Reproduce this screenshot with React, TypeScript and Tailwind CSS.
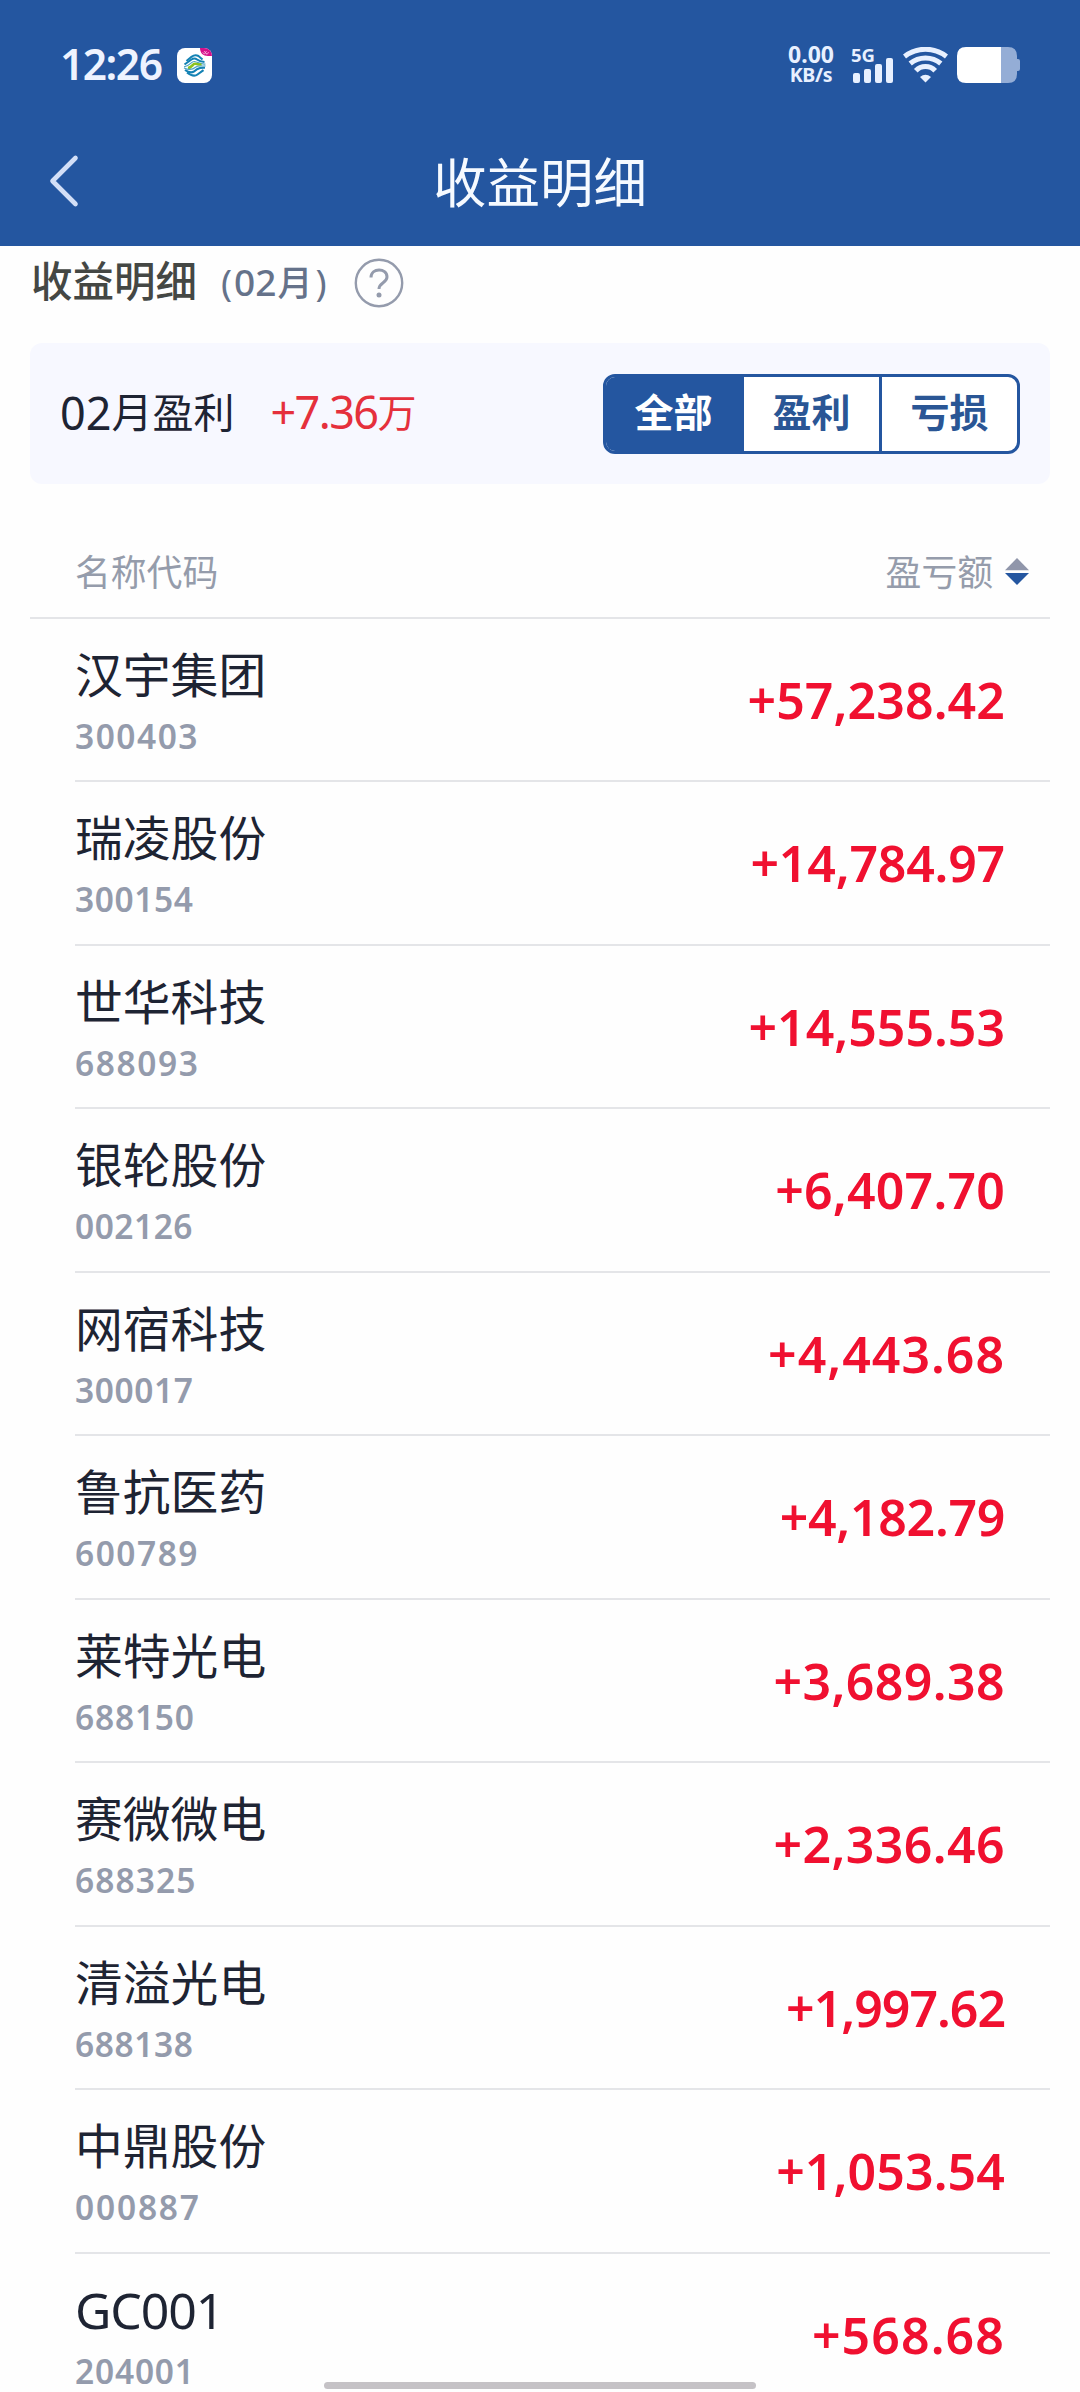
import { useState } from "react";

type Holding = { name: string; code: string; amount: string; codeTrack: string; amountTrack: string };

const holdings: Holding[] = [
  { name: "汉宇集团", code: "300403", amount: "+57,238.42", codeTrack: "tracking-[1.5px]", amountTrack: "tracking-[0.1px]" },
  { name: "瑞凌股份", code: "300154", amount: "+14,784.97", codeTrack: "tracking-[0.6px]", amountTrack: "tracking-[-0.2px]" },
  { name: "世华科技", code: "688093", amount: "+14,555.53", codeTrack: "tracking-[1.6px]", amountTrack: "tracking-[0px]" },
  { name: "银轮股份", code: "002126", amount: "+6,407.70", codeTrack: "tracking-[0.5px]", amountTrack: "tracking-[0.2px]" },
  { name: "网宿科技", code: "300017", amount: "+4,443.68", codeTrack: "tracking-[0.6px]", amountTrack: "tracking-[1px]" },
  { name: "鲁抗医药", code: "600789", amount: "+4,182.79", codeTrack: "tracking-[1.5px]", amountTrack: "tracking-[-0.3px]" },
  { name: "莱特光电", code: "688150", amount: "+3,689.38", codeTrack: "tracking-[0.8px]", amountTrack: "tracking-[0.4px]" },
  { name: "赛微微电", code: "688325", amount: "+2,336.46", codeTrack: "tracking-[1.1px]", amountTrack: "tracking-[0.4px]" },
  { name: "清溢光电", code: "688138", amount: "+1,997.62", codeTrack: "tracking-[0.6px]", amountTrack: "tracking-[-1px]" },
  { name: "中鼎股份", code: "000887", amount: "+1,053.54", codeTrack: "tracking-[1.8px]", amountTrack: "tracking-[0.1px]" },
  { name: "GC001", code: "204001", amount: "+568.68", codeTrack: "tracking-[0.8px]", amountTrack: "tracking-[1.1px]" },
];

const tabs = ["全部", "盈利", "亏损"];

function CarrierIcon() {
  return (
    <svg className="ml-[16px] h-[35px] w-[35px]" viewBox="0 0 35 35" fill="none">
      <clipPath id="tile"><rect width="35" height="35" rx="8" /></clipPath>
      <g clipPath="url(#tile)">
        <rect width="35" height="35" fill="#fff" />
        <path d="M23 0h12v8h-4c-5 0-8-3-8-8Z" fill="#d6108a" />
        <path d="M25.500 4.500l2 1.500 2-3M29 6l3-1.500M27 3l3 3.500" stroke="#f7b6dc" strokeWidth=".8" />
      </g>
      <path d="M9.500 13L14.500 8.800Q18 6.200 21.500 8L25.500 11.500" stroke="#1482b4" strokeWidth="2.100" />
      <path d="M7.500 16.500L14.500 11.500Q17.500 9.500 20 11.500T27.500 14" stroke="#1482b4" strokeWidth="2.100" />
      <path d="M7 18.800C12.500 18.800 14 13 17.500 13.500S23 16.500 28.500 16" stroke="#4da3c2" strokeWidth="1.200" />
      <path d="M11 20C15 19.500 15.500 16 18 15.800S22 17.300 24.500 16.300" stroke="#8bc21f" strokeWidth="2.600" />
      <path d="M7 20C13 22.800 16 21.500 18.500 19.300S24 18.500 28.500 17.800" stroke="#4da3c2" strokeWidth="1.200" />
      <path d="M8 22Q13 25.500 16.500 23.800L20.500 21Q23 19.500 28 19.800" stroke="#1482b4" strokeWidth="2.100" />
      <path d="M10 24.500Q16.500 29.500 20.500 26.500L26.500 22.200" stroke="#1482b4" strokeWidth="2.100" />
    </svg>
  );
}

function StatusBar() {
  return (
    <div className="flex h-[130px] items-center justify-between pl-[60px] pr-[60px]">
      <div className="flex items-center font-['Noto_Sans'] text-[#eef3ff]">
        <span className="w-[101px] whitespace-nowrap pb-[2px] text-[42.500px] font-semibold leading-[48px] tracking-[-1.500px]">12:26</span>
        <CarrierIcon />
      </div>
      <div className="flex items-start font-['Noto_Sans'] text-[#e8f0ff]">
        <div className="mr-[16px] flex w-[48px] flex-col items-center whitespace-nowrap font-bold">
          <span className="text-[23px] leading-[15px]">0.00</span>
          <span className="mt-[4px] text-[19.500px] leading-[17px] tracking-[-0.3px]">KB/s</span>
        </div>
        <div className="relative h-[36px] w-[43px]">
          <span className="absolute left-0 top-0 text-[18.500px] font-bold leading-[15px]">5G</span>
          <div className="absolute bottom-0 left-[2px] flex items-end gap-[4.500px]">
            <i className="h-[10px] w-[6.500px] rounded-[2px] bg-[#e8f0ff]" />
            <i className="h-[14px] w-[6.500px] rounded-[2px] bg-[#e8f0ff]" />
            <i className="h-[19px] w-[6.500px] rounded-[2px] bg-[#e8f0ff]" />
            <i className="h-[25px] w-[6.500px] rounded-[2px] bg-[#e8f0ff]" />
          </div>
        </div>
        <svg className="ml-[9px] h-[36px] w-[45px]" viewBox="0 0 45 36" fill="none" stroke="#e8f0ff" strokeWidth="5">
          <path d="M1.500 9.500C14-.2 31-.2 43.500 9.500" />
          <path d="M7.200 16.500C16 9 29 9 37.800 16.500" />
          <path d="M12.800 23.800C18 18.200 27 18.200 32.200 23.800" />
          <path d="M17 30q5.500-4.500 11 0l-5.500 5.500Z" fill="#e8f0ff" stroke="none" />
        </svg>
        <svg className="ml-[9px] h-[36px] w-[63px]" viewBox="0 0 63 36">
          <path d="M44 0h7q9 0 9 9v3h1q2 0 2 2v8q0 2-2 2h-1v3q0 9-9 9h-7Z" fill="#94add6" />
          <path d="M44 0H9Q0 0 0 9v18q0 9 9 9h35Z" fill="#fff" />
        </svg>
      </div>
    </div>
  );
}

export default function App() {
  const [active, setActive] = useState(0);
  return (
    <div className="relative h-[2392px] w-[1080px] overflow-hidden bg-[#fefefe] font-['Noto_Sans_CJK_SC',sans-serif]">
      <header className="h-[246px] bg-[#2456a0]">
        <StatusBar />
        <div className="grid h-[101px] grid-cols-[200px_1fr_200px] items-center">
          <svg className="ml-[47px] h-[56px] w-[32px]" viewBox="0 0 32 56" fill="none" stroke="#d3dff7" strokeWidth="4.600" strokeLinecap="round" strokeLinejoin="round">
            <path d="M28.500 5L5.500 28L28.500 51" />
          </svg>
          <h1 className="pb-[2px] text-center text-[53.500px] font-normal leading-[60px] text-[#f6faff]">收益明细</h1>
        </div>
      </header>

      <div className="flex h-[97px] items-start pl-[31px] pt-[5px]">
        <h2 className="w-[190px] whitespace-nowrap text-[41.500px] font-medium leading-[56px] text-[#444744]">收益明细</h2>
        <span className="mt-[3px] flex w-[108px] items-baseline whitespace-nowrap font-['Noto_Sans','Noto_Sans_CJK_SC'] text-[37px] font-medium leading-[56px] text-[#65728a]">
          <span className="font-normal">(</span><span className="ml-[2px]">02</span><span className="ml-[1px] text-[35px]">月</span><span className="ml-[3px] font-normal">)</span>
        </span>
        <svg className="ml-[25px] mt-[7px] h-[50px] w-[50px]" viewBox="0 0 50 50" fill="none" stroke="#949bac">
          <circle cx="25" cy="25" r="23.200" strokeWidth="2.400" />
          <path d="M17 19.500C17 9.500 33 9.500 33 19C33 25 25 24.500 25 31" strokeWidth="3" />
          <circle cx="25" cy="37" r="2.500" fill="#949bac" stroke="none" />
        </svg>
      </div>

      <section className="mx-[30px] flex h-[141px] items-center rounded-[12px] bg-[#f7f8ff] pl-[30px] pr-[30px]">
        <div className="flex items-baseline whitespace-nowrap pb-[3px] text-[41px] leading-[60px] text-[#1e2433]">
          <span className="font-['Noto_Sans'] text-[45px]">02</span>
          <span className="relative -top-[2px]">月盈利</span>
        </div>
        <div className="ml-[36px] flex items-baseline whitespace-nowrap pb-[3px] text-[39px] leading-[60px] text-[#e5303c]">
          <span className="font-['Noto_Sans'] text-[45px] tracking-[-1.6px]">+7.36</span>
          <span className="relative -top-[2px]">万</span>
        </div>
        <div className="ml-auto grid h-[80px] w-[417px] grid-cols-[138px_138px_135px] overflow-hidden rounded-[12px] border-[3px] border-[#2456a0] bg-white">
          {tabs.map((tab, i) => (
            <button
              key={tab}
              onClick={() => setActive(i)}
              className={`pb-[7px] text-[39px] font-bold leading-[60px] ${i < 2 ? "border-r-[3px] border-[#2456a0]" : ""} ${active === i ? "bg-[#2456a0] text-white" : "text-[#2a5695]"}`}
            >
              {tab}
            </button>
          ))}
        </div>
      </section>

      <div className="mx-[30px] flex h-[134.500px] items-end justify-between border-b-[2px] border-[#e4e5e8] pb-[20px] pl-[45px] pr-[21px] text-[35.800px] leading-[54px] text-[#959cab]">
        <span>名称代码</span>
        <div className="flex items-center gap-[12px]">
          <span>盈亏额</span>
          <svg className="mt-[4px] h-[27px] w-[24px]" viewBox="0 0 24 27">
            <path d="M12 0L24 12.300H0Z" fill="#9096aa" />
            <path d="M0 15H24L12 27Z" fill="#2456a0" />
          </svg>
        </div>
      </div>

      <ul className="ml-[75px] mr-[30px]">
        {holdings.map((h) => (
          <li key={h.code} className="flex h-[163.500px] justify-between border-b-[2px] border-[#e4e5e8] pr-[45px]">
            <div className="flex flex-col whitespace-nowrap pt-[23px]">
              <span className={h.name === "GC001" ? "pt-[4px] font-['Noto_Sans'] text-[50px] leading-[58px] tracking-[-1.1px] text-[#1e2433]" : "text-[47.800px] leading-[62px] text-[#1e2433]"}>{h.name}</span>
              <span className={`mt-[10px] font-['Noto_Sans'] text-[33.500px] font-semibold leading-[44px] text-[#949bac] ${h.codeTrack}`}>{h.code}</span>
            </div>
            <span className={`pt-[50px] font-['Noto_Sans'] text-[50px] font-semibold leading-[62px] text-[#f01030] ${h.amountTrack}`}>{h.amount}</span>
          </li>
        ))}
      </ul>
      <div className="absolute bottom-[3px] left-[324px] h-[7px] w-[432px] rounded-full bg-[#c5c2c6]" />
    </div>
  );
}
